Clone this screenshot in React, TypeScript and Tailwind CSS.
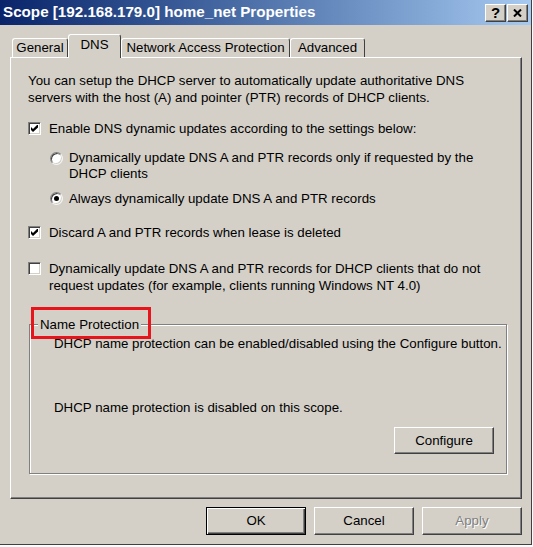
import React from "react";

const raised =
  "border border-t-white border-l-white border-r-[#404040] border-b-[#404040] shadow-[inset_-1px_-1px_0_#808080]";

const Check = ({ checked }: { checked?: boolean }) => (
  <span className="flex h-[13px] w-[13px] shrink-0 items-center justify-center border border-t-[#808080] border-l-[#808080] border-r-white border-b-white bg-white shadow-[inset_1px_1px_0_#404040,inset_-1px_-1px_0_#d4d0c8]">
    {checked && (
      <svg width="7" height="7" viewBox="0 0 7 7">
        <polygon points="0,2 2,4 6.5,-0.5 7,0 7,2.5 2,7 0,5" fill="#000" />
      </svg>
    )}
  </span>
);

const Radio = ({ checked }: { checked?: boolean }) => (
  <span className="flex h-[13px] w-[13px] shrink-0 items-center justify-center rounded-full border border-t-[#808080] border-l-[#808080] border-r-[#f4f4f4] border-b-[#f4f4f4] bg-white shadow-[inset_1px_1px_0_#404040,inset_-1px_-1px_0_#d4d0c8]">
    {checked && <span className="h-[5px] w-[5px] rounded-full bg-black" />}
  </span>
);

const Tab = ({ label, width, active }: { label: string; width: string; active?: boolean }) =>
  active ? (
    <div
      className={`relative z-10 -mb-px h-[24px] ${width} rounded-t-[3px] border-t border-l border-r border-t-white border-l-white border-r-[#404040] bg-[#d4d0c8] pt-px text-center leading-[17px]`}
    >
      {label}
    </div>
  ) : (
    <div
      className={`h-[19px] ${width} rounded-t-[3px] border-t border-l border-r border-t-white border-l-white border-r-[#404040] text-center leading-[17px]`}
    >
      {label}
    </div>
  );

const DialogButton = ({ label, width, isDefault, disabled }: { label: string; width: string; isDefault?: boolean; disabled?: boolean }) => (
  <button
    className={
      isDefault
        ? `flex h-[28px] ${width} items-center justify-center border border-black shadow-[inset_1px_1px_0_#fff,inset_-1px_-1px_0_#404040,inset_-2px_-2px_0_#808080]`
        : `flex h-[28px] ${width} items-center justify-center ${raised}`
    }
  >
    <span className={disabled ? "text-[#808080] [text-shadow:1px_1px_0_#fff]" : ""}>{label}</span>
  </button>
);

export default function App() {
  return (
    <div className="h-[547px] w-[533px] bg-white font-['Liberation_Sans',Arial,sans-serif] text-[13.3px] text-black">
      <div className="flex h-[545px] w-[532px] flex-col border-r border-b border-r-[#404040] border-b-[#404040] bg-[#d4d0c8]">
        {/* Title bar */}
        <div className="flex h-[25px] shrink-0 items-center justify-between bg-linear-to-r from-[#0a246a] to-[#a6caf0] pl-[3px] pr-[3px]">
          <span className="text-[15.2px] font-bold text-white">Scope [192.168.179.0] home_net Properties</span>
          <div className="flex gap-[1px]">
            <span className={`flex h-[18px] w-[21px] items-center justify-center bg-[#d4d0c8] text-[15px] font-bold leading-none ${raised}`}>
              ?
            </span>
            <span className={`flex h-[18px] w-[21px] items-center justify-center bg-[#d4d0c8] ${raised}`}>
              <svg width="9" height="8" viewBox="0 0 9 8">
                <path d="M1 0.5 L8 7.5 M8 0.5 L1 7.5" stroke="#000" strokeWidth="2" />
              </svg>
            </span>
          </div>
        </div>

        <div className="flex flex-col pl-[10px] pt-[9px]">
          {/* Tabs */}
          <div className="flex h-[23px] items-end pl-[2px]">
            <Tab label="General" width="w-[56px]" />
            <Tab label="DNS" width="w-[53px]" active />
            <Tab label="Network Access Protection" width="w-[169px]" />
            <Tab label="Advanced" width="w-[75px]" />
          </div>

          {/* Panel */}
          <div className="flex h-[442px] w-[512px] flex-col border border-t-white border-l-white border-r-[#404040] border-b-[#404040] pl-[17px] shadow-[inset_-1px_-1px_0_#808080]">
            <p className="mt-[14px] leading-[17px]">
              You can setup the DHCP server to automatically update authoritative DNS
              <br />
              servers with the host (A) and pointer (PTR) records of DHCP clients.
            </p>

            <div className="mt-[14px] flex h-[17px] items-center gap-[8px]">
              <Check checked />
              <span>Enable DNS dynamic updates according to the settings below:</span>
            </div>

            <div className="ml-[22px] mt-[13px] flex items-start gap-[6px] leading-[16px]">
              <span className="mt-[2px]">
                <Radio />
              </span>
              <span>
                Dynamically update DNS A and PTR records only if requested by the
                <br />
                DHCP clients
              </span>
            </div>

            <div className="ml-[22px] mt-[8px] flex h-[17px] items-center gap-[6px]">
              <Radio checked />
              <span>Always dynamically update DNS A and PTR records</span>
            </div>

            <div className="mt-[17px] flex h-[17px] items-center gap-[8px]">
              <Check checked />
              <span>Discard A and PTR records when lease is deleted</span>
            </div>

            <div className="mt-[19px] flex items-start gap-[8px] leading-[17px]">
              <span className="mt-[2px]">
                <Check />
              </span>
              <span>
                Dynamically update DNS A and PTR records for DHCP clients that do not
                <br />
                request updates (for example, clients running Windows NT 4.0)
              </span>
            </div>

            {/* Name Protection group */}
            <div className="relative ml-px mt-[30px] flex h-[150px] w-[478px] flex-col border border-[#808080] pl-[24px] pr-[12px] shadow-[inset_1px_1px_0_#fff,1px_1px_0_#fff]">
              <span className="absolute left-[8px] top-[-9px] bg-[#d4d0c8] px-[2px] leading-[17px]">Name Protection</span>
              <span className="absolute left-[1px] top-[-18px] h-[32px] w-[120px] border-[3px] border-[#e8141c]" />
              <p className="mt-[10px] whitespace-nowrap leading-[17px]">
                DHCP name protection can be enabled/disabled using the Configure button.
              </p>
              <p className="mt-[47px] leading-[17px]">DHCP name protection is disabled on this scope.</p>
              <div className="mt-[11px] flex justify-end">
                <button className={`flex h-[27px] w-[100px] items-center justify-center ${raised}`}>Configure</button>
              </div>
            </div>
          </div>

          {/* Dialog buttons */}
          <div className="mt-[8px] flex w-[512px] justify-end gap-[8px]">
            <DialogButton label="OK" width="w-[100px]" isDefault />
            <DialogButton label="Cancel" width="w-[100px]" />
            <DialogButton label="Apply" width="w-[100px]" disabled />
          </div>
        </div>
      </div>
    </div>
  );
}
